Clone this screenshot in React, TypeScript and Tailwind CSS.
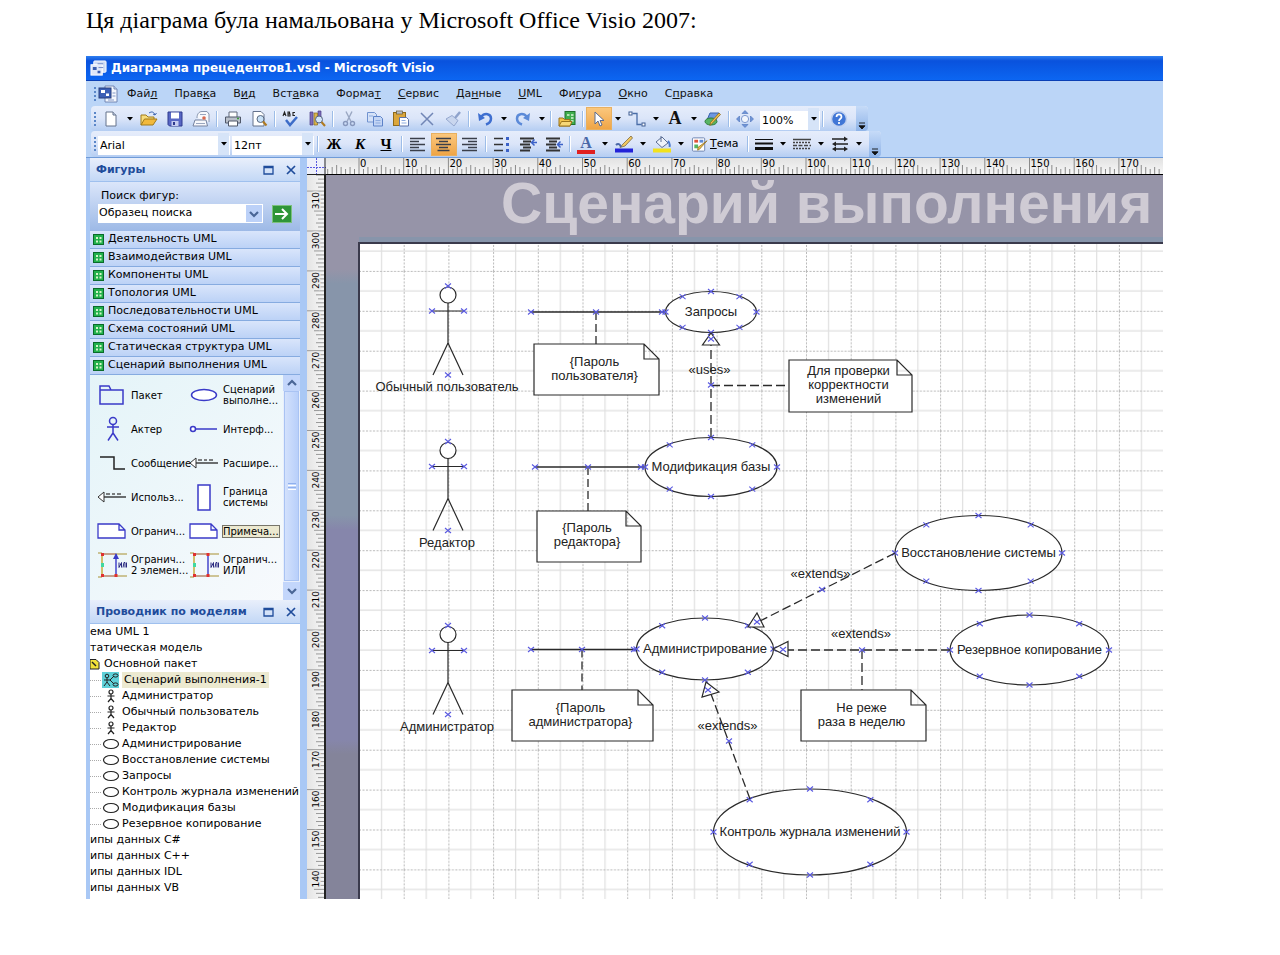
import React, { useEffect, useRef, useState } from "react";

const UI = "font-['DejaVu_Sans','Liberation_Sans',sans-serif]";

/* ---------- toolbar primitives ---------- */

function Grip() {
  return (
    <span className="flex w-[7px] shrink-0 flex-col items-center gap-[2px]" aria-hidden="true">
      <i className="size-[2px] bg-[#5a86c8]" />
      <i className="size-[2px] bg-[#5a86c8]" />
      <i className="size-[2px] bg-[#5a86c8]" />
      <i className="size-[2px] bg-[#5a86c8]" />
    </span>
  );
}

function Sep() {
  return (
    <span className="flex w-[6px] shrink-0 justify-center" aria-hidden="true">
      <i className="h-4 w-px bg-[#9dbde8]" />
      <i className="h-4 w-px bg-white" />
    </span>
  );
}

function Tool({ label, active, children }: { label: string; active?: boolean; children: React.ReactNode }) {
  return (
    <button
      type="button"
      aria-label={label}
      className={
        active
          ? "flex h-[23px] w-[26px] shrink-0 items-center justify-center border border-[#e8b060] bg-linear-to-b from-[#fbc77c] to-[#efa545]"
          : "flex h-[23px] w-[26px] shrink-0 items-center justify-center"
      }
    >
      <svg viewBox="0 0 18 18" className="size-[18px]" fill="none" aria-hidden="true">
        {children}
      </svg>
    </button>
  );
}

function Triangle() {
  return (
    <svg viewBox="0 0 6 4" className="h-[4px] w-[6px]" aria-hidden="true">
      <path d="M0 0h6L3 3.5z" fill="#000" />
    </svg>
  );
}

function Drop({ label }: { label: string }) {
  return (
    <button type="button" aria-label={label} className="flex h-[23px] w-3 shrink-0 items-center justify-center">
      <Triangle />
    </button>
  );
}

function Overflow() {
  return (
    <button
      type="button"
      aria-label="Параметры панели"
      className="ml-1 flex h-full w-3 shrink-0 items-end justify-center rounded-r bg-linear-to-b from-[#c6dbf8] to-[#8fb4e8] pb-px"
    >
      <svg viewBox="0 0 8 8" className="size-2" aria-hidden="true">
        <path d="M1 1h6M1 3.8h6L4 7z" stroke="#111" fill="#111" strokeWidth=".9" />
      </svg>
    </button>
  );
}

function Combo({ label, value, wide }: { label: string; value: string; wide: string }) {
  return (
    <span className={wide}>
      <select
        aria-label={label}
        className="h-[19px] w-full appearance-none bg-white pl-[2px] text-[11px] leading-[19px] text-black"
      >
        <option>{value}</option>
      </select>
      <span className="pointer-events-none absolute inset-y-px right-px flex w-[11px] items-center justify-center bg-[#d6e4f8]">
        <Triangle />
      </span>
    </span>
  );
}

/* ---------- top bars ---------- */

function TitleBar() {
  return (
    <header className="flex h-[25px] items-center gap-1 border-b border-[#0a3fb5] bg-linear-to-b from-[#2f7ff0] via-[#0a52dd] via-20% to-[#0c66f2] pl-1 text-white">
      <svg viewBox="0 0 18 18" className="size-[17px]" aria-hidden="true">
        <rect x="4" y="1" width="13" height="12" rx="1" fill="#cfdcf5" stroke="#fff" />
        <rect x="1" y="5" width="12" height="11" fill="#dfe7f8" stroke="#fff" />
        <path d="M3 7.500h4v3H3zM8 11.500h3v2.500H8z" fill="#3a5db0" />
        <path d="M9 8h5M8 4h6" stroke="#6d86c6" />
      </svg>
      <h2 className="text-[12px] leading-4 font-bold">Диаграмма прецедентов1.vsd - Microsoft Visio</h2>
    </header>
  );
}

const MENU: [string, string, string][] = [
  ["Фай", "л", ""],
  ["Прав", "к", "а"],
  ["В", "и", "д"],
  ["Вст", "а", "вка"],
  ["Форма", "т", ""],
  ["", "С", "ервис"],
  ["Да", "н", "ные"],
  ["", "U", "ML"],
  ["Фи", "г", "ура"],
  ["", "О", "кно"],
  ["С", "п", "равка"],
];

function MenuBar() {
  return (
    <nav className="flex h-[25px] items-center bg-[#bbd5f7] pl-[5px]">
      <Grip />
      <svg viewBox="0 0 20 18" className="mr-[9px] h-[18px] w-5" aria-hidden="true">
        <path d="M7 1h9l3 3v13H7z" fill="#f4f7fd" stroke="#7286b4" />
        <path d="M16 1v3h3" fill="#c6d3ec" stroke="#7286b4" />
        <rect x="1" y="3" width="12" height="10" fill="#3c5fb6" stroke="#29407e" />
        <path d="M3 5h4v3H3zM8 8.500h3v2.500H8z" fill="#fff" />
        <path d="M10 15h6M14.500 8h3M14.500 11h3" stroke="#8398c8" />
      </svg>
      <div className="flex gap-[17px]">
        {MENU.map(([a, key, b]) => (
          <button key={a + key + b} type="button" className="text-[11px] leading-4 text-[#111]">
            {a}
            <u className="underline-offset-1">{key}</u>
            {b}
          </button>
        ))}
      </div>
    </nav>
  );
}

function StandardBar() {
  return (
    <div role="toolbar" aria-label="Стандартная" className="flex bg-[#bbd5f7] pl-[5px]">
      <div className="flex h-[25px] items-center rounded bg-linear-to-b from-[#e6edfb] via-[#dbe5f9] to-[#b4cdf2]">
        <Grip />
        <Tool label="Создать">
          <path d="M4 2h7l3 3v11H4z" fill="#fff" stroke="#64728c" />
          <path d="M11 2v3h3" fill="#cdd8ea" stroke="#64728c" />
        </Tool>
        <Drop label="Варианты создания" />
        <Tool label="Открыть">
          <path d="M1 15V5h5l2 2h6v3" fill="#f7dc7c" stroke="#a17a1a" />
          <path d="M1 15l3.500-6H17l-4 6z" fill="#f2b93c" stroke="#a17a1a" />
          <path d="M9 3c3-2 5-1 6 2m0 0l1.500-2M15 5l-2-1" stroke="#3c64b0" />
        </Tool>
        <Tool label="Сохранить">
          <path d="M2 2h14v14H3.500L2 14.500z" fill="#5867c4" stroke="#2e3a8e" />
          <rect x="5" y="2.500" width="8" height="6" fill="#fff" />
          <rect x="5.500" y="11" width="7" height="5" fill="#c5cdf0" />
          <rect x="7" y="12" width="2" height="3" fill="#2e3a8e" />
        </Tool>
        <Tool label="Сообщение">
          <path d="M5 8c0-4 2-6.500 5-6.500h5l2 2.500v8" fill="#f7f8fc" stroke="#8794ae" />
          <path d="M1 16l2-6h11l1.500 6z" fill="#f7f8fc" stroke="#7683a0" />
          <path d="M4 13.500h9M8 4.500h6" stroke="#9aa6be" />
          <circle cx="12" cy="8" r="1.800" fill="#d9694f" />
        </Tool>
        <Sep />
        <Tool label="Печать">
          <path d="M5 7V2h8v5" fill="#fff" stroke="#60697c" />
          <path d="M1.500 7h15v6h-15z" fill="#b9bfca" stroke="#50586a" />
          <path d="M4.500 11h9v5h-9z" fill="#fff" stroke="#50586a" />
          <path d="M13 8.500h2" stroke="#3b9c3b" strokeWidth="1.500" />
        </Tool>
        <Tool label="Просмотр">
          <path d="M3 1.500h8l3 3V16H3z" fill="#fff" stroke="#64728c" />
          <circle cx="10.500" cy="9" r="3.500" fill="#c9e2f8" stroke="#5a6880" />
          <path d="M13 11.500l3.500 4" stroke="#b07a20" strokeWidth="2" />
        </Tool>
        <Sep />
        <Tool label="Орфография">
          <path
            d="M1 6l1.500-4L4 6M1.500 4.500h2M6 2v4h2V4H6h1.500V2zM13 2.500h-2v3h2"
            stroke="#222"
            strokeWidth="1.100"
          />
          <path d="M4 10l4 5 7-8" stroke="#3c6cc8" strokeWidth="2.500" />
        </Tool>
        <Tool label="Справочные материалы">
          <path d="M2 2h3v13H2zM10 1h3v7h-3z" fill="#7d6cb8" stroke="#4a3e88" strokeWidth=".7" />
          <path d="M6 3h3.500v12H6z" fill="#d9b54c" stroke="#8a6a1c" strokeWidth=".7" />
          <circle cx="11" cy="9.500" r="3.500" fill="#d3e6f9" stroke="#56647e" />
          <path d="M13.500 12l3.500 4" stroke="#b07a20" strokeWidth="2" />
        </Tool>
        <Sep />
        <Tool label="Вырезать">
          <path d="M6 1.500l5 10M12 1.500l-5 10" stroke="#9aa7c2" strokeWidth="1.400" />
          <circle cx="5.500" cy="13.500" r="2" stroke="#8797bc" strokeWidth="1.400" />
          <circle cx="12.500" cy="13.500" r="2" stroke="#8797bc" strokeWidth="1.400" />
        </Tool>
        <Tool label="Копировать">
          <path d="M1.500 2.500h7l2 2V12h-9z" fill="#d5e2f8" stroke="#7193d0" />
          <path d="M7.500 6.500h7l2 2V16h-9z" fill="#c3d5f5" stroke="#5c82c8" />
          <path d="M9.500 10.500h5M9.500 13h5M3 6h4" stroke="#8dabdf" />
        </Tool>
        <Tool label="Вставить">
          <rect x="1.500" y="2.500" width="12" height="13" fill="#dba63c" stroke="#8f6a1a" />
          <rect x="4.500" y="1" width="6" height="3" fill="#b9bfca" stroke="#6a5a30" strokeWidth=".7" />
          <path d="M7.500 7.500h7l2 2V16h-9z" fill="#fff" stroke="#5c73a8" />
          <path d="M9.500 10.500h4M9.500 13h5" stroke="#8dabdf" />
        </Tool>
        <Tool label="Удалить">
          <path d="M3 3l12 12M15 3L3 15" stroke="#7186b6" strokeWidth="1.500" />
        </Tool>
        <Tool label="Формат по образцу">
          <path d="M16 2l-5 6" stroke="#8fa3cc" strokeWidth="2.500" />
          <path d="M8 5.500l6 5-4 5.500L2 9z" fill="#c9d6ee" stroke="#95a8cf" />
        </Tool>
        <Sep />
        <Tool label="Отменить">
          <path d="M5 7c4-5 10-3 10 1.500 0 3-2 5-5 6" stroke="#3f6fd0" strokeWidth="2.500" />
          <path d="M2 3l1 8 6-3z" fill="#3f6fd0" />
        </Tool>
        <Drop label="Список отмены" />
        <Tool label="Вернуть">
          <path d="M13 7C9 2 3 4 3 8.500c0 3 2 5 5 6" stroke="#5c8ad8" strokeWidth="2.500" />
          <path d="M16 3l-1 8-6-3z" fill="#5c8ad8" />
        </Tool>
        <Drop label="Список возврата" />
        <Sep />
        <Tool label="Фигуры">
          <rect x="7" y="1.500" width="10" height="13" fill="#3fae4e" stroke="#20702c" />
          <path d="M9 5h2.500M13 5h2.500M13 8h2.500M13 11h2.500" stroke="#d7f5d7" strokeWidth="1.500" />
          <path d="M1 16V8h4l1.500 1.500H12V16z" fill="#f2c24a" stroke="#9b741c" />
          <path d="M1 16l2.500-4.500H14L12 16z" fill="#f8d878" stroke="#9b741c" />
        </Tool>
        <Sep />
        <Tool label="Указатель" active>
          <path d="M5 2v12l3-3 2 5 2-1-2-4.500h4z" fill="#fff" stroke="#5b6c90" />
        </Tool>
        <Drop label="Указатели" />
        <Tool label="Соединительная линия">
          <path d="M4.500 3.500H9v11h4.500" stroke="#4a6da8" strokeWidth="1.300" />
          <rect x="1" y="2" width="3" height="3" fill="#fff" stroke="#3e5c92" />
          <rect x="14" y="13" width="3" height="3" fill="#fff" stroke="#3e5c92" />
        </Tool>
        <Drop label="Соединители" />
        <button
          type="button"
          aria-label="Текст"
          className="h-[23px] w-[26px] text-center font-['Liberation_Serif',serif] text-[18px] leading-[23px] font-bold text-[#111]"
        >
          A
        </button>
        <Drop label="Инструменты текста" />
        <Tool label="Рисование">
          <path d="M6 3h9l-3 7H3z" fill="#6d97e0" stroke="#3a62ac" />
          <ellipse cx="7" cy="11.500" rx="6" ry="3.500" fill="#57b465" stroke="#2b7a38" />
          <path d="M16.500 4.500L8 13.500l-2 2 .5-3L15 3z" fill="#f0c050" stroke="#8a6a1c" strokeWidth=".8" />
        </Tool>
        <Sep />
        <Tool label="Панорама">
          <path
            d="M9 .5l3 3H6zM9 17.500l3-3H6zM.5 9l3-3v6zM17.500 9l-3-3v6z"
            fill="#6f95d8"
            stroke="#4a70b8"
            strokeWidth=".6"
          />
          <circle cx="9" cy="9" r="3.600" fill="#f2f6fd" stroke="#7d99cf" />
        </Tool>
        <Combo label="Масштаб" value="100%" wide="relative ml-[2px] w-[60px] shrink-0" />
        <Sep />
        <Tool label="Справка">
          <circle cx="9" cy="9" r="7.500" fill="#4076d6" stroke="#c0d0ee" strokeWidth="1.500" />
          <path d="M6.500 7c0-3.500 5-3.500 5 0 0 1.800-2.500 1.800-2.500 4M9 12v2" stroke="#fff" strokeWidth="1.700" />
        </Tool>
        <Overflow />
      </div>
    </div>
  );
}

function FormatBar() {
  return (
    <div role="toolbar" aria-label="Форматирование" className="flex border-b border-[#6f9bd8] bg-[#bbd5f7] pl-[5px]">
      <div className="flex h-[26px] items-center rounded bg-linear-to-b from-[#e6edfb] via-[#dbe5f9] to-[#b4cdf2]">
        <Grip />
        <Combo label="Шрифт" value="Arial" wide="relative w-[132px] shrink-0" />
        <Combo label="Размер шрифта" value="12пт" wide="relative mr-[1px] ml-[2px] w-[82px] shrink-0" />
        <Sep />
        <button type="button" className="w-[26px] text-center font-['Liberation_Serif',serif] text-[15px] font-bold">
          Ж
        </button>
        <button type="button" className="w-[26px] text-center font-['Liberation_Serif',serif] text-[15px] font-bold italic">
          К
        </button>
        <button type="button" className="w-[26px] text-center font-['Liberation_Serif',serif] text-[15px] font-bold underline">
          Ч
        </button>
        <Sep />
        <Tool label="По левому краю">
          <path d="M1 3.500h15M1 6.500h9M1 9.500h15M1 12.500h9M1 15.500h15" stroke="#3a3f4a" strokeWidth="1.500" />
        </Tool>
        <Tool label="По центру" active>
          <path d="M1 3.500h15M4 6.500h9M1 9.500h15M4 12.500h9M2.500 15.500h12" stroke="#3a3f4a" strokeWidth="1.500" />
        </Tool>
        <Tool label="По правому краю">
          <path d="M1 3.500h15M7 6.500h9M1 9.500h15M7 12.500h9M1 15.500h15" stroke="#3a3f4a" strokeWidth="1.500" />
        </Tool>
        <Sep />
        <Tool label="Маркеры">
          <path d="M1 3.500h9M1 9.500h9M1 15.500h9" stroke="#333" strokeWidth="1.500" />
          <path d="M13 2h3v3h-3zM13 8h3v3h-3zM13 14h3v3h-3z" fill="#3c62c8" />
        </Tool>
        <Tool label="Уменьшить отступ">
          <path d="M1 3.500h14M4 6.500h8M1 9.500h10M4 12.500h8M1 15.500h10" stroke="#333" strokeWidth="1.800" />
          <path d="M18 7.500h-5m2.500-3l-3 3 3 3" stroke="#3c62c8" strokeWidth="1.500" />
        </Tool>
        <Tool label="Увеличить отступ">
          <path d="M1 3.500h14M4 6.500h8M1 9.500h10M4 12.500h8M1 15.500h14" stroke="#333" strokeWidth="1.800" />
          <path d="M18 9.500h-5m2.500-3l-3 3 3 3" stroke="#3c62c8" strokeWidth="1.500" />
        </Tool>
        <Sep />
        <button
          type="button"
          aria-label="Цвет текста"
          className="flex h-[23px] w-[26px] flex-col items-center justify-center font-['Liberation_Serif',serif] text-[16px] leading-[15px] font-bold text-[#4a68a8]"
        >
          <span>A</span>
          <span className="h-1 w-[18px] bg-[#e02020]" />
        </button>
        <Drop label="Выбор цвета текста" />
        <Tool label="Цвет линии">
          <path d="M16 1l-8 8-3 3.500 5-1.500 7.500-8z" fill="#f2c860" stroke="#7c6a40" strokeWidth=".8" />
          <path d="M1 10c2-2 4-1 5 2" stroke="#4a68a8" strokeWidth="2" />
          <rect x="0" y="13.500" width="18" height="4" fill="#2222d8" />
        </Tool>
        <Drop label="Выбор цвета линии" />
        <Tool label="Цвет заливки">
          <path d="M3 7l6-5 6 6-6 4.500z" fill="#eef3fb" stroke="#5d6f94" />
          <path d="M8 1v6" stroke="#5d6f94" />
          <path d="M15 6c2 2 2 4 1.500 6" stroke="#4a7bd0" strokeWidth="2" />
          <rect x="0" y="13.500" width="18" height="4" fill="#f2e21c" />
        </Tool>
        <Drop label="Выбор цвета заливки" />
        <button type="button" className="ml-[4px] flex h-[23px] w-[54px] items-center gap-[2px] text-[11px]">
          <svg viewBox="0 0 18 18" className="size-[17px] shrink-0" fill="none" aria-hidden="true">
            <rect x="1.500" y="2" width="13" height="14" rx="1" fill="#fff" stroke="#6c83b0" />
            <path d="M3.500 4h4v3h-4z" fill="#e0533a" />
            <path d="M9 4h4v3H9z" fill="#5c8ad8" />
            <path d="M3.500 9h4v4h-4z" fill="#57b465" />
            <path d="M17 5l-8 9-2 1 .5-3z" fill="#f0c050" stroke="#8a6a1c" strokeWidth=".8" />
          </svg>
          <span>
            <u>Т</u>ема
          </span>
        </button>
        <Sep />
        <Tool label="Толщина линии">
          <path d="M0 4.500h18" stroke="#111" />
          <path d="M0 8.500h18" stroke="#111" strokeWidth="2" />
          <path d="M0 13.500h18" stroke="#111" strokeWidth="3" />
        </Tool>
        <Drop label="Выбор толщины" />
        <Tool label="Тип линии">
          <path d="M0 4.500h18" stroke="#444" strokeWidth="1.500" />
          <path d="M0 7.500h18M0 13.500h18" stroke="#444" strokeWidth="1.500" strokeDasharray="2 1" />
          <path d="M0 10.500h18" stroke="#444" strokeWidth="1.500" strokeDasharray="4 1.500" />
        </Tool>
        <Drop label="Выбор типа линии" />
        <Tool label="Концы линий">
          <path d="M1 4h14M3 9h14M3 14h12" stroke="#222" strokeWidth="1.300" />
          <path d="M13 1.500l4 2.500-4 2.500zM5 6.500L1 9l4 2.500zM5 11.500L1 14l4 2.500zM13 11.500l4 2.500-4 2.500z" fill="#222" />
        </Tool>
        <Drop label="Выбор концов" />
        <Overflow />
      </div>
    </div>
  );
}

/* ---------- side panels ---------- */

function PanelHeader({ title }: { title: string }) {
  return (
    <div className="flex h-6 items-center border-b border-[#9fc0ee] bg-linear-to-b from-[#e9effb] to-[#c3d8f6] pr-1 pl-[6px]">
      <h3 className="flex-1 text-[11px] leading-4 font-bold whitespace-nowrap text-[#1f4c9b]">{title}</h3>
      <button type="button" aria-label="Развернуть" className="mr-3">
        <svg viewBox="0 0 11 10" className="h-[10px] w-[11px]" aria-hidden="true">
          <path d="M1 1.500h9V9H1zM1 2.500h9" stroke="#1f4c9b" fill="none" strokeWidth="1.300" />
        </svg>
      </button>
      <button type="button" aria-label="Закрыть">
        <svg viewBox="0 0 10 10" className="size-[10px]" aria-hidden="true">
          <path d="M1 1l8 8M9 1L1 9" stroke="#1f4c9b" strokeWidth="1.700" />
        </svg>
      </button>
    </div>
  );
}

const STENCILS = [
  "Деятельность UML",
  "Взаимодействия UML",
  "Компоненты UML",
  "Топология UML",
  "Последовательности UML",
  "Схема состояний UML",
  "Статическая структура UML",
  "Сценарий выполнения UML",
];

function Chevron({ up }: { up?: boolean }) {
  return (
    <svg viewBox="0 0 10 8" className="h-2 w-[10px]" aria-hidden="true">
      <path d={up ? "M1 6l4-4 4 4" : "M1 2l4 4 4-4"} stroke="#4a6696" strokeWidth="2.200" fill="none" />
    </svg>
  );
}

const B = "#3a3ac8";

function Usage() {
  return (
    <g>
      <path d="M2 15l6-5v10z" stroke="#333" fill="#fff" />
      <path d="M8 15h22" stroke="#333" strokeWidth="1.400" />
      <path d="M10 12h4M16 12h3M21 12h4" stroke="#555" strokeWidth="1.400" />
    </g>
  );
}

function Bracket({ arrow }: { arrow?: boolean }) {
  return (
    <g>
      <path d="M2 3h4v24H2M31 4H6M31 26H6" stroke="#a89030" />
      <path d="M6 4v22" stroke="#d8b840" />
      <path d="M20 4v22" stroke={B} strokeWidth="1.400" />
      <path d="M6 4h14M6 26h14" stroke="#c08080" />
      <path d="M5 3h3v3H5zM5 24h3v3H5zM18.500 24h3v3h-3z" fill="#e03030" />
      {arrow ? <path d="M20 3l-3 6h6z" fill={B} /> : <path d="M18.500 3h3v3h-3z" fill="#e03030" />}
      <path d="M5 13h3v4H5z" fill="#40d8a0" />
      <path d="M23 12.500v5l2.500-5v5M27 17.500l1-5h1v5M30.500 12.500v5" stroke="#2a2a80" />
    </g>
  );
}

const NOTE_ICON = <path d="M2 8h21l6 6v8H2zM23 8v6h6" stroke={B} fill="#fff" strokeWidth="1.300" />;

const SHAPES: { text: string; icon: React.ReactNode; selected?: boolean }[] = [
  {
    text: "Пакет",
    icon: <path d="M4 10V6h9l2 4M4 10h23v14H4z" stroke={B} fill="none" strokeWidth="1.500" />,
  },
  {
    text: "Сценарий\nвыполне...",
    icon: <ellipse cx="16" cy="15" rx="12.500" ry="5.500" stroke={B} fill="#fff" strokeWidth="1.500" />,
  },
  {
    text: "Актер",
    icon: (
      <g stroke={B} strokeWidth="1.500" fill="none">
        <circle cx="17" cy="7" r="3.500" />
        <path d="M17 10.500V19M11 13h12M17 19l-5 7.500M17 19l5 7.500" />
      </g>
    ),
  },
  {
    text: "Интерф...",
    icon: (
      <g stroke={B} strokeWidth="1.500" fill="#fff">
        <circle cx="5" cy="15" r="2.500" />
        <path d="M7.500 15H29" />
      </g>
    ),
  },
  { text: "Сообщение", icon: <path d="M4 9h14v12h11" stroke="#222" fill="none" strokeWidth="1.500" /> },
  { text: "Расшире...", icon: <Usage /> },
  { text: "Использ...", icon: <Usage /> },
  {
    text: "Граница\nсистемы",
    icon: <rect x="10" y="3" width="12" height="25" stroke={B} fill="#fff" strokeWidth="1.500" />,
  },
  { text: "Огранич...", icon: NOTE_ICON },
  { text: "Примеча...", icon: NOTE_ICON, selected: true },
  { text: "Огранич...\n2 элемен...", icon: <Bracket arrow /> },
  { text: "Огранич...\nИЛИ", icon: <Bracket /> },
];

function ShapesPanel() {
  return (
    <section className="flex flex-col">
      <PanelHeader title="Фигуры" />
      <form className="bg-linear-to-b from-[#dbe6fa] to-[#9db9e6] px-2 pt-[6px] pb-2">
        <label htmlFor="shape-search" className="block pl-[3px] text-[11px] leading-4">
          Поиск фигур:
        </label>
        <div className="flex items-center">
          <div className="flex h-[19px] w-[165px] bg-white">
            <input
              id="shape-search"
              defaultValue="Образец поиска"
              className="min-w-0 flex-1 bg-transparent pl-[1px] text-[11px] outline-none"
            />
            <button type="button" aria-label="Список" className="m-px flex w-[16px] items-center justify-center bg-[#bcd1f8]">
              <Chevron />
            </button>
          </div>
          <button
            type="submit"
            aria-label="Найти"
            className="ml-[9px] flex h-[18px] w-5 items-center justify-center border border-[#7cc07c] bg-[#2f9538]"
          >
            <svg viewBox="0 0 14 12" className="h-3 w-[14px]" aria-hidden="true">
              <path d="M0 6h12M7 1l5 5-5 5" stroke="#fff" strokeWidth="2" fill="none" />
            </svg>
          </button>
        </div>
      </form>
      <ul>
        {STENCILS.map((name) => (
          <li key={name}>
            <button
              type="button"
              className="flex h-[18px] w-full items-center gap-1 border-b border-[#86abe0] bg-linear-to-b from-[#d9e5fb] to-[#bcd2f6] pl-[3px] text-[11px] whitespace-nowrap"
            >
              <svg viewBox="0 0 11 11" className="size-[11px]" aria-hidden="true">
                <rect x=".5" y=".5" width="10" height="10" fill="#22b14c" stroke="#0a6b2a" />
                <path d="M3 3h2v2H3zM6.500 3h2v2h-2zM3 6.500h2v2H3zM6.500 6.500h2v2h-2z" fill="#d6f5c8" />
              </svg>
              {name}
            </button>
          </li>
        ))}
      </ul>
      <div className="flex h-[225px] bg-linear-to-br from-[#e4f4f8] to-[#f8fafd]">
        <ul className="grid min-w-0 flex-1 auto-rows-[34px] grid-cols-[92px_1fr] pt-[3px] pl-[6px]">
          {SHAPES.map((shape, i) => (
            <li key={i} className="flex items-center gap-[3px]">
              <svg viewBox="0 0 32 30" className="h-[30px] w-8 shrink-0" fill="none" aria-hidden="true">
                {shape.icon}
              </svg>
              <span
                className={
                  shape.selected
                    ? "bg-[#ece9d0] text-[10px] leading-[11px] whitespace-pre outline outline-[#77756a]"
                    : "text-[10px] leading-[11px] whitespace-pre"
                }
              >
                {shape.text}
              </span>
            </li>
          ))}
        </ul>
        <div className="flex w-[17px] shrink-0 flex-col bg-[#e8effc]">
          <button type="button" aria-label="Вверх" className="flex h-4 items-center justify-center bg-[#c3d6fb]">
            <Chevron up />
          </button>
          <div className="mx-px flex flex-1 flex-col items-center justify-center gap-px border border-[#a9c3f3] bg-linear-to-r from-[#d3e1fc] to-[#b8cffa]">
            <i className="h-px w-2 bg-[#8fb0ee]" />
            <i className="h-px w-2 bg-white" />
            <i className="h-px w-2 bg-[#8fb0ee]" />
            <i className="h-px w-2 bg-white" />
          </div>
          <button type="button" aria-label="Вниз" className="mt-px flex h-[18px] items-center justify-center bg-[#c3d6fb]">
            <Chevron />
          </button>
        </div>
      </div>
    </section>
  );
}

type Kind = "root" | "model" | "package" | "diagram" | "actor" | "usecase";

const TREE: [Kind, string][] = [
  ["root", "ема UML 1"],
  ["model", "татическая модель"],
  ["package", "Основной пакет"],
  ["diagram", "Сценарий выполнения-1"],
  ["actor", "Администратор"],
  ["actor", "Обычный пользователь"],
  ["actor", "Редактор"],
  ["usecase", "Администрирование"],
  ["usecase", "Восстановление системы"],
  ["usecase", "Запросы"],
  ["usecase", "Контроль журнала изменений"],
  ["usecase", "Модификация базы"],
  ["usecase", "Резервное копирование"],
  ["root", "ипы данных C#"],
  ["root", "ипы данных C++"],
  ["root", "ипы данных IDL"],
  ["root", "ипы данных VB"],
];

function TreeIcon({ kind }: { kind: Kind }) {
  if (kind === "root" || kind === "model") return null;
  if (kind === "package") {
    return (
      <svg viewBox="0 0 10 12" className="mr-1 h-3 w-[10px] shrink-0" aria-hidden="true">
        <path d="M0 1.500h6l3 3V11H0z" fill="#f2e23a" stroke="#222" />
        <path d="M2 4l4 4" stroke="#222" strokeWidth="1.500" />
      </svg>
    );
  }
  return (
    <svg viewBox="0 0 30 16" className="mr-[2px] h-4 w-[30px] shrink-0" fill="none" stroke="#222" aria-hidden="true">
      <path d="M0 8.500h11" stroke="#aaa" strokeDasharray="1 1" />
      {kind === "diagram" && (
        <g>
          <rect x="12" y="0" width="17" height="16" fill="#5fd0d8" stroke="none" />
          <circle cx="17" cy="4" r="1.800" />
          <path d="M17 6v4M14 8h6M17 10l-3 4M17 10l3 4M20 8l4-4M20 8l4 4" />
          <ellipse cx="25.500" cy="3.500" rx="2.500" ry="1.600" />
          <ellipse cx="25.500" cy="12.500" rx="2.500" ry="1.600" />
        </g>
      )}
      {kind === "actor" && (
        <g strokeWidth="1.200">
          <circle cx="21" cy="4" r="2" />
          <path d="M21 6v4.500M17.500 8h7M21 10.500l-3 3.500M21 10.500l3 3.500" />
        </g>
      )}
      {kind === "usecase" && <ellipse cx="21" cy="8" rx="7.500" ry="4.500" strokeWidth="1.200" fill="#fff" />}
    </svg>
  );
}

function ExplorerPanel() {
  return (
    <section className="flex flex-1 flex-col bg-white">
      <PanelHeader title="Проводник по моделям" />
      <ul className="flex-1 pb-[3px]">
        {TREE.map(([kind, name], i) => (
          <li key={i} className="flex h-4 items-center text-[11px] leading-4 whitespace-nowrap">
            <TreeIcon kind={kind} />
            <span className={kind === "diagram" ? "bg-[#ece9d0] px-[2px]" : ""}>{name}</span>
          </li>
        ))}
      </ul>
    </section>
  );
}

/* ---------- rulers ---------- */

const X0 = 33;
const XSTEP = 4.47;
const Y0 = 56;
const YSTEP = 3.99;

function useSize<T extends Element>() {
  const ref = useRef<T>(null);
  const [size, setSize] = useState({ width: 0, height: 0 });
  useEffect(() => {
    if (!ref.current) return;
    const observer = new ResizeObserver(([entry]) => {
      setSize({ width: entry.contentRect.width, height: entry.contentRect.height });
    });
    observer.observe(ref.current);
    return () => observer.disconnect();
  }, []);
  return [ref, size] as const;
}

function tickLength(n: number) {
  if (n % 10 === 0) return 17;
  if (n % 5 === 0) return 10;
  return n % 2 === 0 ? 8 : 6;
}

function RulerTop() {
  const [ref, { width }] = useSize<HTMLDivElement>();
  const count = Math.max(0, Math.floor((width - X0) / XSTEP));
  const ticks = Array.from({ length: count + 8 }, (_, i) => i - 7);
  return (
    <div
      ref={ref}
      className="h-[17px] min-w-0 flex-1 border-b border-black bg-linear-to-b from-[#e2e2e2] to-[#f7f7f7]"
    >
      <svg className="block h-[16px] w-full" role="img" aria-label="Горизонтальная линейка">
        {ticks.map((n) => {
          const x = X0 + n * XSTEP;
          return <path key={n} d={`M${x} 16V${17 - tickLength(Math.abs(n))}`} stroke="#8a8a8a" />;
        })}
        {ticks
          .filter((n) => n >= 0 && n % 10 === 0 && X0 + n * XSTEP + 22 < width)
          .map((n) => (
            <text key={n} x={X0 + n * XSTEP + 1} y="9" fontSize="10">
              {n}
            </text>
          ))}
      </svg>
    </div>
  );
}

function RulerLeft() {
  const [ref, { height }] = useSize<HTMLDivElement>();
  const count = Math.max(0, Math.floor((height - Y0) / YSTEP));
  const ticks = Array.from({ length: count + 15 }, (_, i) => 314 - i);
  return (
    <div
      ref={ref}
      className="relative w-[19px] shrink-0 border-r-2 border-[#222] bg-linear-to-r from-[#e4e4e4] to-[#f7f7f7]"
    >
      <svg className="absolute inset-0 size-full" role="img" aria-label="Вертикальная линейка">
        {ticks.map((n) => {
          const y = Y0 + (300 - n) * YSTEP;
          return <path key={n} d={`M17 ${y}H${17 - tickLength(n)}`} stroke="#999" />;
        })}
        {ticks
          .filter((n) => n % 10 === 0 && Y0 + (300 - n) * YSTEP + 20 < height)
          .map((n) => (
            <text
              key={n}
              textAnchor="end"
              fontSize="9"
              stroke="#eaeaea"
              strokeWidth="3"
              paintOrder="stroke"
              transform={`translate(12 ${Y0 + (300 - n) * YSTEP + 1}) rotate(-90)`}
            >
              {n}
            </text>
          ))}
      </svg>
    </div>
  );
}

/* ---------- diagram ---------- */

const INK = "#2a2a2a";

function Mark({ x, y }: { x: number; y: number }) {
  return <path d={`M${x - 3} ${y - 2.5}l6 5M${x + 3} ${y - 2.5}l-6 5`} stroke="#5a5ae0" strokeWidth="1.100" />;
}

function Label({ x, y, lines }: { x: number; y: number; lines: string[] }) {
  return (
    <text textAnchor="middle" fontSize="13" fill="#222" fontFamily="Liberation Sans, Arial, sans-serif">
      {lines.map((line, i) => (
        <tspan key={i} x={x} y={y + 4 + i * 14}>
          {line}
        </tspan>
      ))}
    </text>
  );
}

function UseCase({ x, y, rx, ry, text }: { x: number; y: number; rx: number; ry: number; text: string }) {
  const dx = rx * 0.625;
  const dy = ry * 0.75;
  const marks = [
    [0, -ry],
    [0, ry],
    [-rx, 0],
    [rx, 0],
    [-dx, -dy],
    [dx, -dy],
    [-dx, dy],
    [dx, dy],
  ];
  return (
    <g>
      <ellipse cx={x} cy={y} rx={rx} ry={ry} fill="#fff" stroke={INK} strokeWidth="1.200" />
      {marks.map(([mx, my], i) => (
        <Mark key={i} x={x + mx} y={y + my} />
      ))}
      <Label x={x} y={y} lines={[text]} />
    </g>
  );
}

function Actor({ y, text }: { y: number; text: string }) {
  return (
    <g>
      <circle cx="448" cy={y - 16} r="8" fill="#fff" stroke={INK} strokeWidth="1.200" />
      <path
        d={`M448 ${y - 8}v40M432 ${y}h32M448 ${y + 32}l-15 32M448 ${y + 32}l15 32`}
        stroke={INK}
        strokeWidth="1.200"
        fill="none"
      />
      <Mark x={448} y={y - 25} />
      <Mark x={432} y={y} />
      <Mark x={464} y={y} />
      <Mark x={448} y={y + 64} />
      <Label x={447} y={y + 76} lines={[text]} />
    </g>
  );
}

function Note({ x, y, w, h, lines, ty }: { x: number; y: number; w: number; h: number; lines: string[]; ty: number }) {
  return (
    <g>
      <path
        d={`M${x} ${y}h${w - 15}l15 15v${h - 15}h${-w}zM${x + w - 15} ${y}v15h15`}
        fill="#fff"
        stroke={INK}
        strokeWidth="1.200"
      />
      <Label x={x + w / 2 - 2} y={ty} lines={lines} />
    </g>
  );
}

function Association({ x1, x2, y, mid, bottom }: { x1: number; x2: number; y: number; mid: number; bottom: number }) {
  return (
    <g>
      <path d={`M${x1} ${y}H${x2}`} stroke={INK} strokeWidth="1.600" />
      <path d={`M${mid} ${y}V${bottom}`} stroke={INK} strokeWidth="1.300" strokeDasharray="8 4" />
      <Mark x={x1} y={y} />
      <Mark x={mid} y={y} />
      <Mark x={x2 - 3} y={y} />
    </g>
  );
}

function Canvas() {
  return (
    <div className="relative min-w-0 flex-1 overflow-hidden bg-[#9694a8]">
      <svg className="absolute inset-0 size-full" role="img" aria-label="Диаграмма прецедентов">
        <defs>
          <pattern id="grid" x="33" y="56" width="44.700" height="39.900" patternUnits="userSpaceOnUse">
            <path d="M22.500 0V39.900M0 20H44.700" stroke="#e0e0e0" strokeWidth="1.200" />
            <path d="M.5 0V39.900M0 .5H44.700" stroke="#b8b8b8" strokeDasharray="2 1.500" />
          </pattern>
          <linearGradient id="desk" x1="0" y1="0" x2="0" y2="1">
            <stop offset=".13" stopColor="#9694a8" />
            <stop offset=".15" stopColor="#8795aa" />
            <stop offset=".47" stopColor="#8795aa" />
            <stop offset=".49" stopColor="#8686ab" />
            <stop offset=".78" stopColor="#8686ab" />
            <stop offset=".8" stopColor="#84849a" />
          </linearGradient>
        </defs>
        <rect width="33" height="100%" fill="url(#desk)" />
        <rect x="33" y="62" width="100%" height="6" fill="#8795ab" />
        <rect x="33" y="68" width="100%" height="100%" fill="#fff" />
        <rect x="33" y="68" width="100%" height="100%" fill="url(#grid)" />
        <path d="M33 2000V68H4000" stroke="#3a3a4c" strokeWidth="2" fill="none" />
        <text
          x="175"
          y="48"
          fontSize="57"
          fontWeight="700"
          fill="#cfcbd4"
          fontFamily="Liberation Sans, Arial, sans-serif"
        >
          Сценарий выполнения
        </text>
        <g transform="translate(-326 -175)">
          <Actor y={311} text="Обычный пользователь" />
          <Actor y={466.5} text="Редактор" />
          <Actor y={650.5} text="Администратор" />

          <Association x1={531} x2={665} y={312} mid={596} bottom={344} />
          <Association x1={535} x2={644} y={467} mid={588} bottom={511} />
          <Association x1={531} x2={637} y={649.5} mid={582} bottom={690} />

          <UseCase x={711} y={312} rx={45.5} ry={20.5} text="Запросы" />
          <UseCase x={711} y={467} rx={66} ry={29.5} text="Модификация базы" />
          <UseCase x={705} y={649} rx={68.5} ry={31} text="Администрирование" />
          <UseCase x={978.5} y={553} rx={83.5} ry={37.5} text="Восстановление системы" />
          <UseCase x={1029.5} y={650} rx={79.5} ry={35} text="Резервное копирование" />
          <UseCase x={810} y={832} rx={96.5} ry={43} text="Контроль журнала изменений" />

          <Note x={534} y={344} w={125} h={51} ty={362} lines={["{Пароль", "пользователя}"]} />
          <Note x={537} y={511} w={104} h={51} ty={528} lines={["{Пароль", "редактора}"]} />
          <Note x={512} y={690} w={141} h={51} ty={708} lines={["{Пароль", "администратора}"]} />
          <Note x={789} y={360} w={123} h={52} ty={371} lines={["Для проверки", "корректности", "изменений"]} />
          <Note x={801} y={690} w={125} h={51} ty={708} lines={["Не реже", "раза в неделю"]} />

          <g stroke={INK} strokeWidth="1.300" strokeDasharray="9 4" fill="none">
            <path d="M711 437V345M711 385.500H789" />
            <path d="M895 553L760 621" />
            <path d="M950 650H788M862 650V690" />
            <path d="M750 799L711 694" />
          </g>
          <g stroke={INK} strokeWidth="1.200" fill="#fff">
            <path d="M711 333l8.500 12h-17z" />
            <path d="M748 627l9-14 7 14z" />
            <path d="M773 649l15-7.500v15z" />
            <path d="M706 682l13 10-17 5z" />
          </g>
          <Mark x={711} y={339} />
          <Mark x={711} y={385} />
          <Mark x={757} y={622} />
          <Mark x={822} y={589.5} />
          <Mark x={783} y={649.5} />
          <Mark x={862} y={650} />
          <Mark x={708} y={690} />
          <Mark x={729} y={741} />
          <Label x={709.5} y={370} lines={["«uses»"]} />
          <Label x={820.5} y={574} lines={["«extends»"]} />
          <Label x={861} y={634} lines={["«extends»"]} />
          <Label x={727.5} y={726} lines={["«extends»"]} />
        </g>
      </svg>
    </div>
  );
}

/* ---------- page ---------- */

export default function App() {
  return (
    <main className={`${UI} min-h-screen bg-white pt-[8px] pr-[117px] pb-14 pl-[86px] text-black`}>
      <h1 className="mb-6 font-['Liberation_Serif',serif] text-[24px] leading-6 whitespace-nowrap">
        Ця діаграма була намальована у Microsoft Office Visio 2007:
      </h1>
      <div>
        <TitleBar />
        <MenuBar />
        <StandardBar />
        <FormatBar />
        <div className="flex">
          <aside className="flex w-[221px] shrink-0 flex-col border-r-[7px] border-l-[4px] border-[#a9c8f5]">
            <ShapesPanel />
            <ExplorerPanel />
          </aside>
          <div className="flex min-w-0 flex-1 flex-col">
            <div className="flex">
              <svg viewBox="0 0 19 17" className="h-[17px] w-[19px] bg-[#eef0fa]" aria-hidden="true">
                <path d="M9.500 0v17M0 9.500h19" stroke="#5a5ae0" strokeDasharray="2 1" />
                <path d="M0 16.500h19M18 0v17" stroke="#222" />
              </svg>
              <RulerTop />
            </div>
            <div className="flex min-h-0 flex-1">
              <RulerLeft />
              <Canvas />
            </div>
          </div>
        </div>
      </div>
    </main>
  );
}
